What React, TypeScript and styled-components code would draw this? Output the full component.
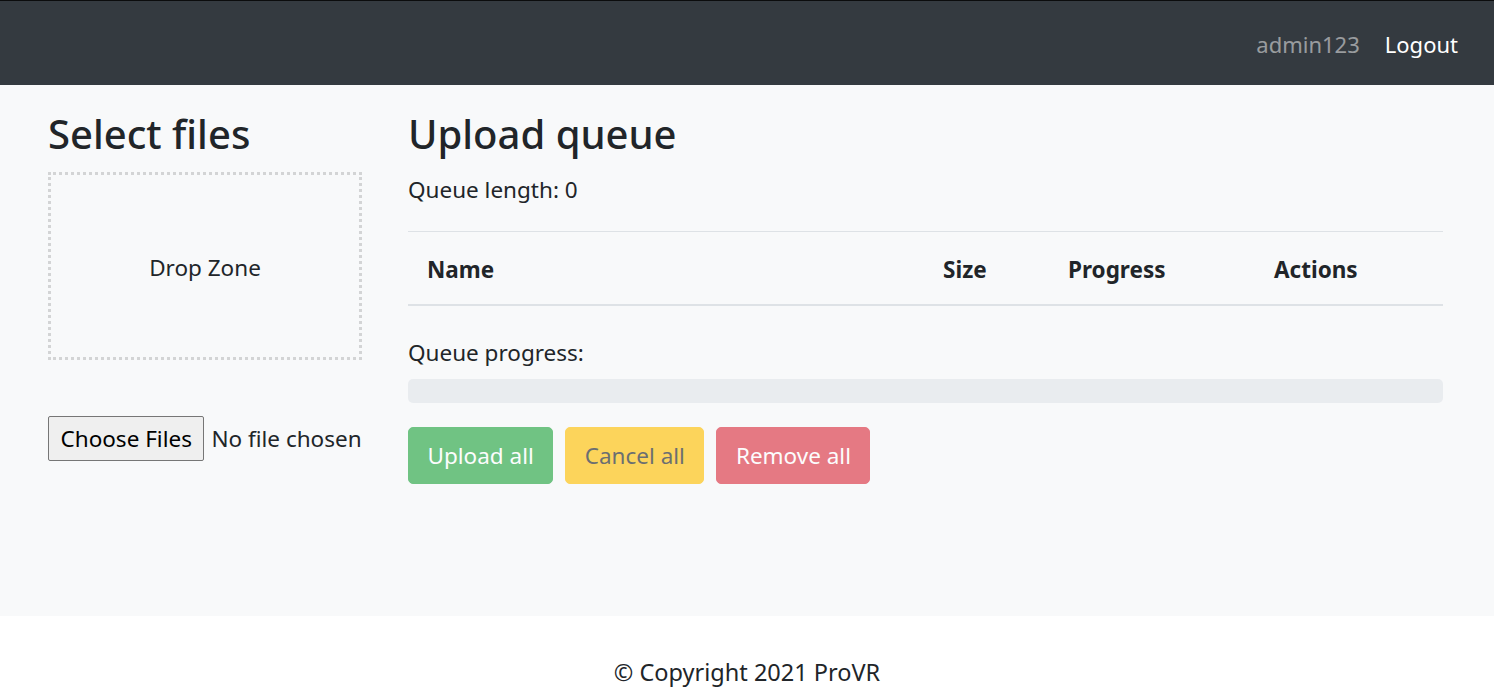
import React from "react";
import styled, { createGlobalStyle } from "styled-components";

const Global = createGlobalStyle`
  html, body { margin: 0; padding: 0; background: #ffffff; }
  body {
    font-family: "Noto Sans", "Open Sans", sans-serif;
    color: #212529;
    font-size: 22.5px;
    line-height: 1.5;
  }
  * { box-sizing: border-box; }
`;

const Page = styled.div`
  display: flex;
  flex-direction: column;
  min-height: 697px;
`;

const Navbar = styled.nav`
  height: 85px;
  background: #343a40;
  border-top: 1px solid #0b0c0d;
  display: flex;
  align-items: center;
  justify-content: flex-end;
  padding: 2px 36px 0 0;
  gap: 25px;
`;

const NavText = styled.span<{ $muted?: boolean }>`
  font-size: 22px;
  color: ${(p) => (p.$muted ? "rgba(255,255,255,0.5)" : "#ffffff")};
`;

const Main = styled.main`
  background: #f8f9fa;
  height: 531px;
  display: grid;
  grid-template-columns: 314px 1035px;
  column-gap: 46px;
  align-items: start;
  padding: 25px 0 0 48px;
`;

const Column = styled.section`
  display: flex;
  flex-direction: column;
`;

const Heading = styled.h2`
  margin: 0;
  font-size: 40px;
  font-weight: 500;
  line-height: 48px;
`;

const DropZone = styled.div`
  margin-top: 14px;
  height: 188px;
  border: 3px dotted #d3d4d5;
  display: flex;
  align-items: center;
  justify-content: center;
  padding-top: 4px;
`;

const FileRow = styled.div`
  margin-top: 56px;
  display: flex;
  align-items: center;
  gap: 7px;
`;

const FileButton = styled.button`
  font-family: inherit;
  font-size: 22.5px;
  color: #000;
  background: #efefef;
  border: 1px solid #767676;
  border-radius: 2px;
  height: 45px;
  padding: 0 11.5px;
`;

const Para = styled.p<{ $top: number }>`
  margin: ${(p) => p.$top}px 0 0;
`;

const Table = styled.div`
  margin-top: 24px;
  border-top: 1px solid #dee2e6;
  border-bottom: 2px solid #dee2e6;
  display: grid;
  grid-template-columns: 516px 125px 206px 1fr;
  padding: 21px 0 17px;
`;

const Th = styled.div`
  padding: 0 19px;
  font-weight: 700;
`;

const ProgressBar = styled.div`
  margin-top: 10px;
  height: 24px;
  border-radius: 5px;
  background: #e9ecef;
`;

const Buttons = styled.div`
  margin-top: 24px;
  display: flex;
  gap: 12px;
`;

const Btn = styled.button<{ $bg: string; $fg: string }>`
  font-family: inherit;
  font-size: 22.5px;
  height: 57px;
  padding: 0 18.5px;
  border-radius: 5px;
  border: 1px solid ${(p) => p.$bg};
  background: ${(p) => p.$bg};
  color: ${(p) => p.$fg};
  opacity: 0.65;
`;

const Footer = styled.footer`
  background: #ffffff;
  flex: 1;
  display: flex;
  justify-content: center;
  padding-top: 39px;
  font-size: 23.5px;
`;

export default function App() {
  return (
    <>
      <Global />
      <Page>
        <Navbar>
          <NavText $muted>admin123</NavText>
          <NavText>Logout</NavText>
        </Navbar>
        <Main>
          <Column>
            <Heading>Select files</Heading>
            <DropZone>Drop Zone</DropZone>
            <FileRow>
              <FileButton>Choose Files</FileButton>
              <span>No file chosen</span>
            </FileRow>
          </Column>
          <Column>
            <Heading>Upload queue</Heading>
            <Para $top={15}>Queue length: 0</Para>
            <Table>
              <Th>Name</Th>
              <Th>Size</Th>
              <Th>Progress</Th>
              <Th>Actions</Th>
            </Table>
            <Para $top={30}>Queue progress:</Para>
            <ProgressBar />
            <Buttons>
              <Btn $bg="#28a745" $fg="#ffffff">Upload all</Btn>
              <Btn $bg="#ffc107" $fg="#212529">Cancel all</Btn>
              <Btn $bg="#dc3545" $fg="#ffffff">Remove all</Btn>
            </Buttons>
          </Column>
        </Main>
        <Footer>© Copyright 2021 ProVR</Footer>
      </Page>
    </>
  );
}
